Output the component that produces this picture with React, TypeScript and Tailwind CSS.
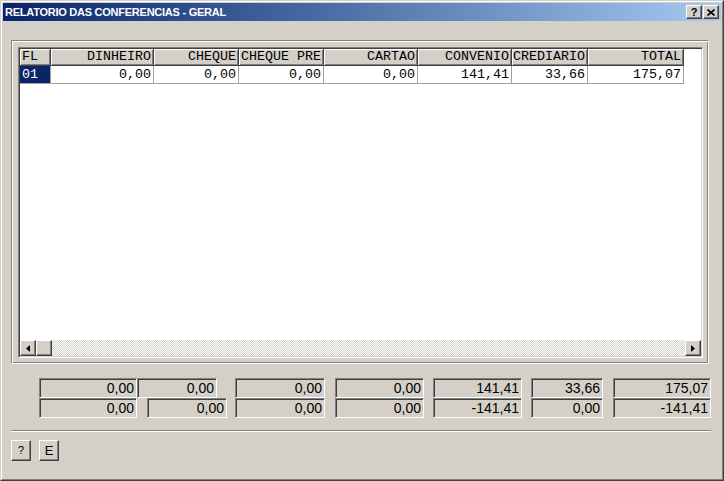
const cols = [
  { label: "FL", value: "01", w: "w-[31px]", left: true },
  { label: "DINHEIRO", value: "0,00", w: "w-[103px]" },
  { label: "CHEQUE", value: "0,00", w: "w-[85px]" },
  { label: "CHEQUE PRE", value: "0,00", w: "w-[85px]" },
  { label: "CARTAO", value: "0,00", w: "w-[94px]" },
  { label: "CONVENIO", value: "141,41", w: "w-[94px]" },
  { label: "CREDIARIO", value: "33,66", w: "w-[76px]" },
  { label: "TOTAL", value: "175,07", w: "w-[96px]" },
];

const totals = [
  { value: "0,00", w: "w-[98px]", m: "ml-0" },
  { value: "0,00", w: "w-[80px]", m: "ml-0" },
  { value: "0,00", w: "w-[90px]", m: "ml-[18px]" },
  { value: "0,00", w: "w-[89px]", m: "ml-[10px]" },
  { value: "141,41", w: "w-[89px]", m: "ml-[9px]" },
  { value: "33,66", w: "w-[72px]", m: "ml-[9px]" },
  { value: "175,07", w: "w-[98px]", m: "ml-[10px]" },
];

const diffs = [
  { value: "0,00", w: "w-[98px]", m: "ml-0" },
  { value: "0,00", w: "w-[80px]", m: "ml-[10px]" },
  { value: "0,00", w: "w-[90px]", m: "ml-[8px]" },
  { value: "0,00", w: "w-[89px]", m: "ml-[10px]" },
  { value: "-141,41", w: "w-[89px]", m: "ml-[9px]" },
  { value: "0,00", w: "w-[72px]", m: "ml-[9px]" },
  { value: "-141,41", w: "w-[98px]", m: "ml-[10px]" },
];

const raised =
  "border border-t-white border-l-white border-r-[#404040] border-b-[#404040] shadow-[inset_-1px_-1px_0_#808080] bg-[#d4d0c8]";

function ScrollButton({ dir }: { dir: "left" | "right" }) {
  return (
    <div className={`w-[16px] h-[16px] flex items-center justify-center ${raised}`}>
      <svg width="4" height="7" viewBox="0 0 4 7">
        {dir === "left" ? (
          <polygon points="4,0 4,7 0,3.5" fill="#000" />
        ) : (
          <polygon points="0,0 0,7 4,3.5" fill="#000" />
        )}
      </svg>
    </div>
  );
}

function Field({ value, w, m }: { value: string; w: string; m: string }) {
  return (
    <div
      className={`${w} ${m} h-[20px] bg-[#d4d0c8] border border-t-[#808080] border-l-[#808080] border-r-white border-b-white shadow-[inset_1px_1px_0_#404040,inset_-1px_-1px_0_#d4d0c8] flex items-center justify-end pr-[2px] text-[14px] leading-[16px] text-black`}
    >
      {value}
    </div>
  );
}

export default function App() {
  return (
    <div className="w-[724px] h-[481px] border border-t-[#d4d0c8] border-l-[#d4d0c8] border-r-[#404040] border-b-[#404040] bg-[#d4d0c8] font-['Liberation_Sans',Arial,sans-serif]">
      <div className="h-full border border-t-white border-l-white border-r-[#808080] border-b-[#808080] p-[1px] flex flex-col">
        {/* title bar */}
        <div className="h-[18px] flex items-center bg-linear-to-r from-[#0a246a] to-[#a6caf0] pl-[2px] pr-[2px]">
          <span className="text-white text-[11px] font-bold tracking-[-0.25px] leading-none flex-1 pt-[1px]">
            RELATORIO DAS CONFERENCIAS - GERAL
          </span>
          <div className={`w-[16px] h-[14px] flex items-center justify-center text-[11px] font-bold leading-none text-black ${raised}`}>
            ?
          </div>
          <div className={`w-[16px] h-[14px] ml-[1px] flex items-center justify-center ${raised}`}>
            <svg width="8" height="7" viewBox="0 0 8 7">
              <path d="M0.5 0.5 L7.5 6.5 M7.5 0.5 L0.5 6.5" stroke="#000" strokeWidth="1.6" />
            </svg>
          </div>
        </div>

        {/* panel with grid */}
        <div className="mt-[19px] ml-[8px] w-[698px] h-[324px] border border-t-[#808080] border-l-[#808080] border-r-white border-b-white shadow-[inset_1px_1px_0_#fff,inset_-1px_-1px_0_#808080] pl-[6px] pt-[6px]">
          <div className="w-[685px] h-[311px] border border-t-[#808080] border-l-[#808080] border-r-white border-b-white shadow-[inset_1px_1px_0_#404040,inset_-1px_-1px_0_#d4d0c8] p-[1px] flex flex-col">
            <div className="flex-1 bg-white flex flex-col font-['Liberation_Mono','Courier_New',monospace] text-[13.33px] leading-none">
              <div className="flex h-[17px]">
                {cols.map((c) => (
                  <div
                    key={c.label}
                    className={`${c.w} h-full flex items-center whitespace-nowrap overflow-hidden ${c.left ? "justify-start pl-[2px]" : "justify-end pr-[2px]"} bg-[#d4d0c8] border-r border-b border-[#404040] shadow-[inset_1px_1px_0_#fff,inset_-1px_-1px_0_#808080] text-black`}
                  >
                    {c.label}
                  </div>
                ))}
              </div>
              <div className="flex h-[18px]">
                {cols.map((c) => (
                  <div
                    key={c.label}
                    className={`${c.w} h-full flex items-center whitespace-nowrap ${c.left ? "justify-start pl-[2px] bg-[#0a246a] text-white" : "justify-end pr-[2px] text-black"} border-r border-b border-[#a0a0a0]`}
                  >
                    {c.value}
                  </div>
                ))}
              </div>
              <div className="flex-1" />
              <div className="h-[16px] flex bg-[repeating-conic-gradient(#d4d0c8_0%_25%,#ffffff_0%_50%)] bg-[length:2px_2px]">
                <ScrollButton dir="left" />
                <div className={`w-[16px] h-[16px] ${raised}`} />
                <div className="flex-1" />
                <ScrollButton dir="right" />
              </div>
            </div>
          </div>
        </div>

        {/* totals */}
        <div className="mt-[14px] pl-[36px] flex flex-col">
          <div className="flex">
            {totals.map((t, i) => (
              <Field key={i} {...t} />
            ))}
          </div>
          <div className="flex">
            {diffs.map((t, i) => (
              <Field key={i} {...t} />
            ))}
          </div>
        </div>

        {/* separator */}
        <div className="mt-[12px] ml-[8px] w-[700px] border-t border-b border-t-[#808080] border-b-white" />

        {/* buttons */}
        <div className="mt-[8px] ml-[8px] flex gap-[8px]">
          <button className={`w-[20px] h-[21px] flex items-center justify-center text-[11px] text-black ${raised}`}>
            ?
          </button>
          <button className={`w-[20px] h-[21px] flex items-center justify-center text-[13px] text-black ${raised}`}>
            E
          </button>
        </div>
      </div>
    </div>
  );
}
